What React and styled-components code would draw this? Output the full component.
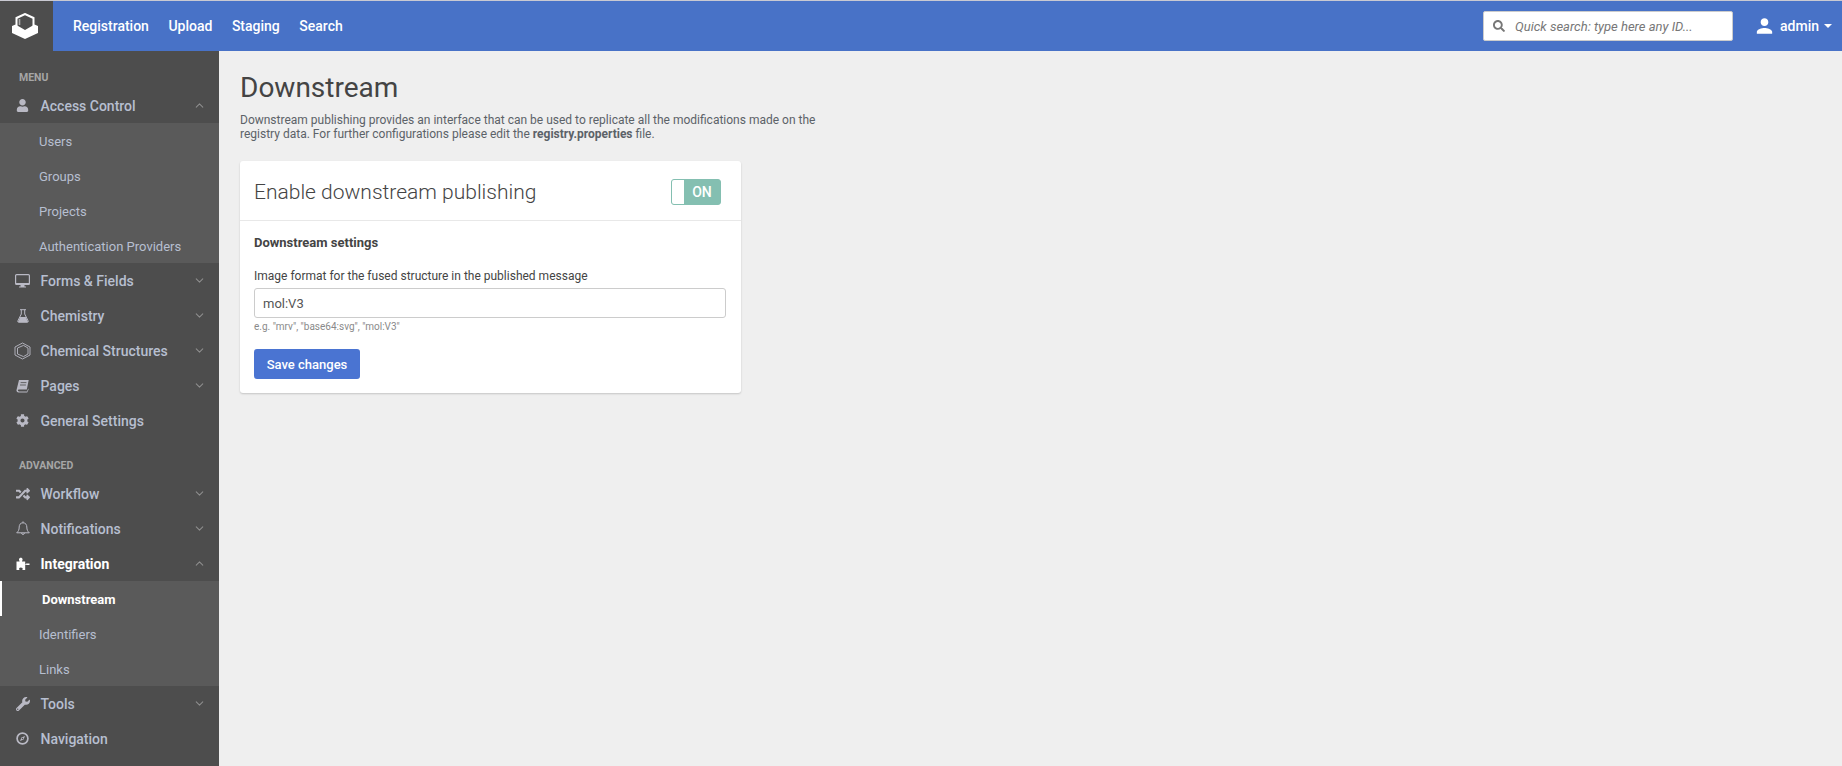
import React from "react";
import styled, { createGlobalStyle } from "styled-components";
import { FaUser, FaCog, FaRandom, FaWrench, FaSearch } from "react-icons/fa";
import { MdPerson } from "react-icons/md";
import { ChevronDown, ChevronUp } from "lucide-react";

const Global = createGlobalStyle`
  html, body { margin: 0; padding: 0; height: 100%; background: #efefef; overflow: hidden; }
  body { font-family: Roboto, "Liberation Sans", sans-serif; }
  * { box-sizing: border-box; }
`;

const Page = styled.div`
  width: 1842px; height: 766px; display: flex; flex-direction: column; border-top: 1px solid #c9c9d2;
`;
const TopBar = styled.header`
  height: 50px; flex: none; background: #4872c7; display: flex; align-items: center; color: #fff;
`;
const LogoBox = styled.div`
  width: 53px; height: 50px; background: #4d4d4d; display: flex; align-items: center; justify-content: center;
  padding-right: 3px;
`;
const TopNav = styled.nav`
  display: flex; gap: 19.5px; margin-left: 20px; flex: 1;
`;
const TopLink = styled.a`
  font-size: 14px; font-weight: 500; color: #fff; line-height: 50px;
`;
const SearchBox = styled.div`
  width: 250px; height: 30px; background: #fff; border-radius: 2px; border: 1px solid #ccc;
  display: flex; align-items: center; padding-left: 9px; gap: 10px;
  font-size: 13px; font-style: italic; color: #777; margin-right: 20px;
  svg { color: #777; font-size: 12px; }
`;
const UserMenu = styled.div`
  display: flex; align-items: center; gap: 4px; font-size: 14px; font-weight: 500; margin-right: 10px; width: 79px;
`;
const Caret = styled.span`
  width: 0; height: 0; border-left: 4px solid transparent; border-right: 4px solid transparent;
  border-top: 4px solid #fff; margin-left: 1px;
`;
const Body = styled.div`
  flex: 1; display: flex; min-height: 0;
`;
const Sidebar = styled.aside`
  width: 219px; flex: none; background: #4d4d4d; padding-top: 17px;
`;
const SectionLabel = styled.div`
  font-size: 10.5px; font-weight: 700; color: #a6a6a6; padding-left: 19px; line-height: 20px; height: ${p => p.$h || 20}px;
  margin-top: ${p => p.$top || 0}px;
`;
const Row = styled.div`
  height: 35px; display: flex; align-items: center; font-size: 14px;
  color: ${p => (p.$active ? "#fff" : "#b7bfd0")};
  font-weight: ${p => (p.$active ? 700 : 500)};
  padding-right: 13px;
`;
const IconSlot = styled.span`
  width: 40.5px; padding: 0 10.5px 0 15px; flex: none; display: flex; align-items: center; justify-content: center;
  font-size: 13px; color: ${p => (p.$active ? "#fff" : "#b9b9c4")};
  svg { flex: none; }
`;
const RowLabel = styled.span`
  flex: 1;
`;
const Chevron = styled.span`
  display: flex; color: #8d8d8d;
`;
const SubList = styled.div`
  background: #5a5a5a;
`;
const SubRow = styled.div`
  height: 35px; display: flex; align-items: center; font-size: 13px; padding-top: 2px;
  padding-left: ${p => (p.$active ? 40 : 39)}px;
  color: ${p => (p.$active ? "#fff" : "#b7bfd0")};
  font-weight: ${p => (p.$active ? 700 : 400)};
  border-left: ${p => (p.$active ? "2px solid #fff" : "none")};
`;
const Main = styled.main`
  flex: 1; padding: 21px 0 0 21px;
`;
const Title = styled.h1`
  margin: 0; font-size: 28px; font-weight: 400; color: #444; line-height: 32px;
`;
const Lead = styled.p`
  margin: 9px 0 0; width: 590px; font-size: 12px; line-height: 14px; color: #5c6268;
  b { font-weight: 700; }
`;
const Card = styled.section`
  margin-top: 20px; width: 501px; background: #fff; border-radius: 3px; box-shadow: 0 1px 2px rgba(0,0,0,.18);
`;
const CardHead = styled.div`
  height: 60px; border-bottom: 1px solid #e8e8e8; display: flex; align-items: center; justify-content: space-between;
  padding: 2px 20px 0 14px;
`;
const CardTitle = styled.h2`
  margin: 0; font-size: 21px; font-weight: 300; color: #444;
`;
const Toggle = styled.div`
  width: 50px; height: 26px; border-radius: 3px; border: 1px solid #84bfb1; background: #84bfb1;
  display: flex; overflow: hidden; font-size: 14px; font-weight: 500; color: #fff; align-items: center;
`;
const Knob = styled.span`
  width: 12px; height: 100%; background: #fff; flex: none;
`;
const KnobLabel = styled.span`
  flex: 1; text-align: center;
`;
const CardBody = styled.div`
  padding: 14px 14px 14px;
`;
const SettingsTitle = styled.div`
  font-size: 13px; font-weight: 700; color: #444; line-height: 15px;
`;
const Label = styled.label`
  display: block; margin-top: 19px; font-size: 12px; color: #444; line-height: 14px;
`;
const Input = styled.div`
  margin-top: 5px; height: 30px; border: 1px solid #ccc; border-radius: 3px; width: 472px;
  display: flex; align-items: center; padding-left: 8px; font-size: 13px; color: #555;
`;
const Hint = styled.div`
  margin-top: 3px; font-size: 10px; line-height: 12px; color: #8a8a8a;
`;
const SaveButton = styled.button`
  display: block; margin-top: 16px; width: 106px; height: 30px; border: 0; border-radius: 3px; background: #4a74d2;
  color: #fff; font: 500 13px Roboto, sans-serif; padding: 0;
`;

const Logo = () => (
  <svg width="26" height="26" viewBox="0 0 26 26">
    <path d="M4.5 13.5 V5 L13 1 L21.5 5 V13.5" fill="none" stroke="#fff" strokeWidth="2" />
    <path d="M7.5 12 V6" fill="none" stroke="#aaa" strokeWidth="1.6" />
    <path d="M0 13 L3.5 11.5 L13 17 L22.5 11.5 L26 13 V20 L13 26 L0 20 Z" fill="#fff" />
  </svg>
);

const DesktopIcon = () => (
  <svg width="15" height="14" viewBox="0 0 15 14">
    <rect x=".6" y=".6" width="13.8" height="9.6" rx="1" fill="none" stroke="currentColor" strokeWidth="1.2" />
    <path d="M.5 9 H14.5 V10.5 Q14.5 11 14 11 H1 Q.5 11 .5 10.5 Z M5.5 11 H9.5 V12.5 H11 V13.5 H4 V12.5 H5.5 Z" fill="currentColor" />
  </svg>
);

const FlaskIcon = () => (
  <svg width="12" height="14" viewBox="0 0 12 14">
    <path d="M3 .7 H9 M4.3 .7 V5 L.9 11.8 Q.4 13.3 1.8 13.3 H10.2 Q11.6 13.3 11.1 11.8 L7.7 5 V.7" fill="none" stroke="currentColor" strokeWidth="1" />
    <path d="M3.2 8 H8.8 L11 13 H1 Z" fill="currentColor" />
  </svg>
);

const HexIcon = () => (
  <svg width="17" height="18" viewBox="0 0 17 18" fill="none" stroke="#b9b9c4" strokeWidth=".9">
    <path d="M8.5 1 L16 5 V13 L8.5 17 L1 13 V5 Z" />
    <path d="M9.5 3.4 L14 6 V12 L9.5 14.6 L3.5 12 V6 Z" />
  </svg>
);

const BookIcon = () => (
  <svg width="13" height="14" viewBox="0 0 13 14">
    <path d="M3 1 H12.7 L10.8 10.4 H3 Q1.7 10.5 1.9 11.6 Q2 12.4 3 12.4 H11 L12.2 9.6 L12.6 10.4 L11.2 13.5 H2.6 Q.6 13.5 .4 11.4 Z" fill="currentColor" />
    <path d="M4.6 3.6 H10.4 M4 6 H9.9" stroke="#4d4d4d" strokeWidth=".8" />
  </svg>
);

const BellIcon = () => (
  <svg width="14" height="15" viewBox="0 0 14 15" fill="none" stroke="currentColor" strokeWidth="1">
    <path d="M7 1.8 C4.2 1.8 3.2 4 3.2 6 C3.2 9 2.2 10.5 .7 11.8 H13.3 C11.8 10.5 10.8 9 10.8 6 C10.8 4 9.8 1.8 7 1.8 Z" />
    <path d="M5.6 12 A1.4 1.4 0 0 0 8.4 12" />
    <path d="M7 .4 V1.8" />
  </svg>
);

const PuzzleIcon = () => (
  <svg width="14" height="14" viewBox="0 0 14 14">
    <path d="M.5 4.5 H3.6 C3.6 3.6 3 3.4 3 2.4 C3 1.3 3.9 .8 4.8 .8 C5.7 .8 6.6 1.3 6.6 2.4 C6.6 3.4 6 3.6 6 4.5 H9.2 V7 C9.8 7 10.2 6.4 11 6.4 H13.5 V8 H11 C10.2 8 9.8 7.6 9.2 7.6 V13 H6.4 C6.4 12.2 7 11.8 6.4 10.9 C5.8 10.2 3.9 10.2 3.3 10.9 C2.9 11.8 3.4 12.2 3.4 13 H.5 Z" fill="currentColor" />
  </svg>
);

const CompassIcon = () => (
  <svg width="13" height="13" viewBox="0 0 13 13">
    <circle cx="6.5" cy="6.5" r="5.4" fill="none" stroke="currentColor" strokeWidth="1.7" />
    <path d="M9 4 L7.6 7.6 L4 9 L5.4 5.4 Z" fill="currentColor" />
    <circle cx="6.5" cy="6.5" r=".8" fill="#4d4d4d" />
  </svg>
);

const Item = ({ icon, label, open, chevron = true, active }) => (
  <Row $active={active}>
    <IconSlot $active={active}>{icon}</IconSlot>
    <RowLabel>{label}</RowLabel>
    {chevron && <Chevron>{open ? <ChevronUp size={13} /> : <ChevronDown size={13} />}</Chevron>}
  </Row>
);

export default function App() {
  return (
    <Page>
      <Global />
      <TopBar>
        <LogoBox><Logo /></LogoBox>
        <TopNav>
          {["Registration", "Upload", "Staging", "Search"].map(t => <TopLink key={t}>{t}</TopLink>)}
        </TopNav>
        <SearchBox><FaSearch /><span>Quick search: type here any ID...</span></SearchBox>
        <UserMenu><MdPerson size={24} />admin<Caret /></UserMenu>
      </TopBar>
      <Body>
        <Sidebar>
          <SectionLabel>MENU</SectionLabel>
          <Item icon={<FaUser />} label="Access Control" open />
          <SubList>
            {["Users", "Groups", "Projects", "Authentication Providers"].map(t => <SubRow key={t}>{t}</SubRow>)}
          </SubList>
          <Item icon={<DesktopIcon />} label="Forms & Fields" />
          <Item icon={<FlaskIcon />} label="Chemistry" />
          <Item icon={<HexIcon />} label="Chemical Structures" />
          <Item icon={<BookIcon />} label="Pages" />
          <Item icon={<FaCog />} label="General Settings" chevron={false} />
          <SectionLabel $top={18} $h={20}>ADVANCED</SectionLabel>
          <Item icon={<FaRandom size={14} />} label="Workflow" />
          <Item icon={<BellIcon />} label="Notifications" />
          <Item icon={<PuzzleIcon />} label="Integration" open active />
          <SubList>
            <SubRow $active>Downstream</SubRow>
            <SubRow>Identifiers</SubRow>
            <SubRow>Links</SubRow>
          </SubList>
          <Item icon={<FaWrench size={14} />} label="Tools" />
          <Item icon={<CompassIcon />} label="Navigation" chevron={false} />
        </Sidebar>
        <Main>
          <Title>Downstream</Title>
          <Lead>
            Downstream publishing provides an interface that can be used to replicate all the modifications made on the registry data. For further configurations please edit the <b>registry.properties</b> file.
          </Lead>
          <Card>
            <CardHead>
              <CardTitle>Enable downstream publishing</CardTitle>
              <Toggle><Knob /><KnobLabel>ON</KnobLabel></Toggle>
            </CardHead>
            <CardBody>
              <SettingsTitle>Downstream settings</SettingsTitle>
              <Label>Image format for the fused structure in the published message</Label>
              <Input>mol:V3</Input>
              <Hint>e.g. "mrv", "base64:svg", "mol:V3"</Hint>
              <SaveButton>Save changes</SaveButton>
            </CardBody>
          </Card>
        </Main>
      </Body>
    </Page>
  );
}
